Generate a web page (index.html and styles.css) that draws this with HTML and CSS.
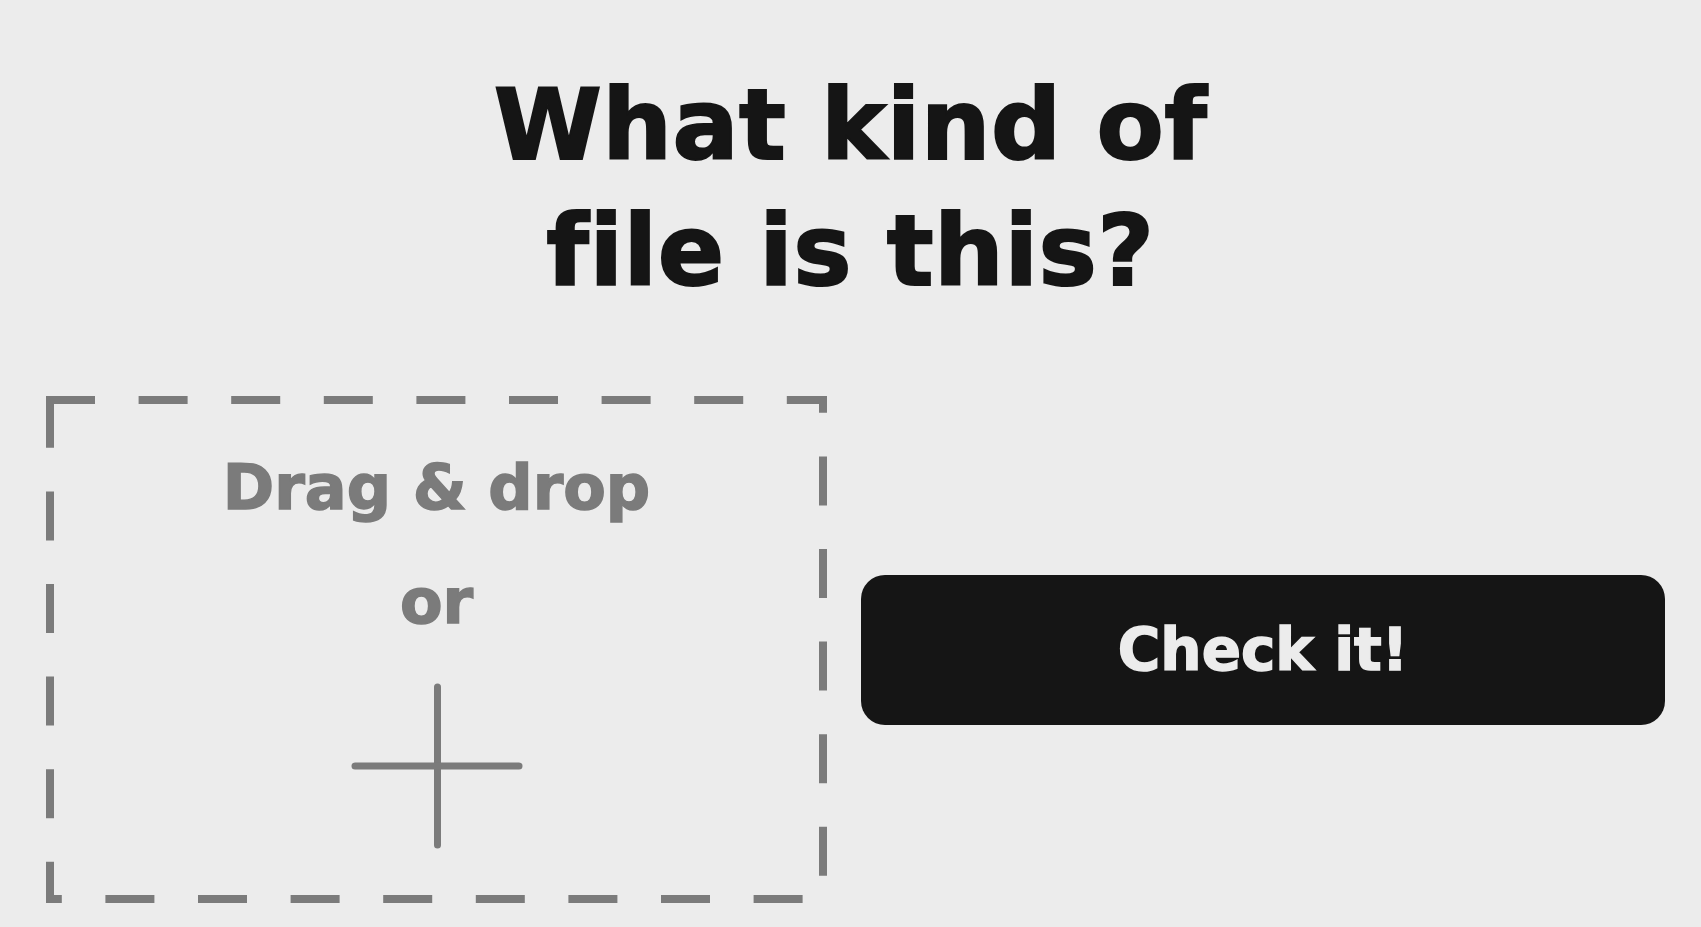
FILE: index.html
```html
<!DOCTYPE html>
<html lang="en">
<head>
<meta charset="utf-8">
<title>What kind of file is this?</title>
<link rel="stylesheet" href="styles.css">
</head>
<body>
<main class="page">
  <h1 class="title">What kind of<br>file is this?</h1>
  <section class="row">
    <div class="dropzone">
      <svg class="dash" width="781" height="507" viewBox="0 0 781 507" aria-hidden="true">
        <rect x="4" y="4" width="773" height="499" fill="none" stroke="#7b7b7b" stroke-width="8" stroke-dasharray="41 51.6" stroke-linecap="square"/>
      </svg>
      <p class="drag">Drag &amp; drop</p>
      <p class="or">or</p>
      <svg class="plus" width="172" height="166" viewBox="0 0 172 166" aria-hidden="true">
        <line x1="86.5" y1="4" x2="86.5" y2="162" stroke="#7b7b7b" stroke-width="7" stroke-linecap="round"/>
        <line x1="4" y1="83" x2="168" y2="83" stroke="#7b7b7b" stroke-width="7" stroke-linecap="round"/>
      </svg>
    </div>
    <button class="check" type="button">Check it!</button>
  </section>
</main>
</body>
</html>
```

FILE: styles.css
```css
html, body {
  margin: 0;
  padding: 0;
  background: #ececec;
}

.page {
  width: 1701px;
  height: 927px;
  overflow: hidden;
  font-family: "DejaVu Sans", "Liberation Sans", sans-serif;
  font-weight: bold;
  font-variant-ligatures: none;
  font-feature-settings: "liga" 0, "clig" 0;
}

.title {
  margin: 0;
  padding-top: 62px;
  text-align: center;
  font-size: 98px;
  line-height: 126px;
  font-weight: bold;
  color: #151515;
  letter-spacing: 0.5px;
  -webkit-text-stroke: 2px #151515;
}

.row {
  display: flex;
  align-items: center;
  gap: 34px;
  margin-top: 82px;
  padding: 0 36px 0 46px;
}

.dropzone {
  position: relative;
  flex: 0 0 781px;
  height: 507px;
  box-sizing: border-box;
  padding-top: 55px;
  display: flex;
  flex-direction: column;
  align-items: center;
  color: #7b7b7b;
}

.dash {
  position: absolute;
  left: 0;
  top: 0;
}

.drag, .or {
  margin: 0;
  font-size: 62px;
  line-height: 74px;
  -webkit-text-stroke: 1.5px #7b7b7b;
}

.or {
  margin-top: 40px;
}

.plus {
  display: block;
  margin-top: 44px;
}

.check {
  flex: 1;
  height: 150px;
  border: none;
  border-radius: 24px;
  background: #151515;
  color: #ececec;
  font-family: "DejaVu Sans", "Liberation Sans", sans-serif;
  font-weight: bold;
  font-size: 58px;
  font-variant-ligatures: none;
  -webkit-text-stroke: 1.5px #ececec;
  padding: 0;
  cursor: pointer;
}
```
